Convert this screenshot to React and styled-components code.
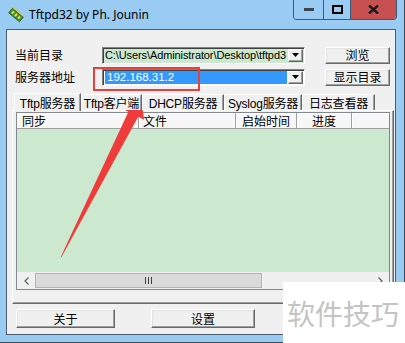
import React from 'react';
import styled, { createGlobalStyle } from 'styled-components';

const Global = createGlobalStyle`
  html, body { margin: 0; padding: 0; background: #fff; }
  body {
    width: 405px; height: 343px; overflow: hidden;
    font-family: "Liberation Sans", "Noto Sans CJK SC", sans-serif;
    font-size: 12px; color: #000;
  }
  * { box-sizing: border-box; }
`;

const Window = styled.div`
  position: relative;
  width: 405px;
  height: 343px;
  background: #99cbf3;
  border-right: 1px solid #3b4a57;
  border-bottom: 1px solid #3b4a57;
  padding: 0 8px 7px 6px;
  display: flex;
  flex-direction: column;
`;

const TitleBar = styled.div`
  height: 29px;
  flex: none;
  display: flex;
  align-items: flex-start;
`;

const TitleLeft = styled.div`
  height: 29px;
  display: flex;
  align-items: center;
  gap: 5px;
  padding-left: 2px;
  font-family: "Noto Sans", "Noto Sans CJK SC", sans-serif;
  font-size: 12px;
  color: #000;
`;

const Controls = styled.div`
  margin-left: auto;
  margin-right: -1px;
  display: flex;
  height: 20px;
  border: 1px solid #3d5a75;
  border-top: none;
  border-radius: 0 0 4px 4px;
  overflow: hidden;
`;

const CtlBtn = styled.div`
  width: ${p => p.$w}px;
  height: 100%;
  display: flex;
  align-items: center;
  justify-content: center;
  background: ${p => (p.$close ? '#c75050' : '#99cbf3')};
  border-left: ${p => (p.$first ? 'none' : '1px solid #3d5a75')};
`;

const Client = styled.div`
  flex: 1;
  min-height: 0;
  background: #f0f0f0;
  border: 1px solid #4c5c6a;
  display: flex;
  flex-direction: column;
`;

const Form = styled.div`
  display: grid;
  grid-template-columns: 87px 203px 1fr;
  grid-auto-rows: 18px;
  row-gap: 4px;
  padding: 16px 5px 0 8px;
  align-items: center;
`;

const Label = styled.div`
  font-family: "Noto Sans CJK SC", sans-serif;
  font-size: 12px;
  line-height: 18px;
`;

const Combo = styled.div`
  height: 17px;
  display: flex;
  align-items: center;
  background: ${p => p.$bg};
  border-style: solid;
  border-width: 1px;
  border-color: #828282 #ffffff #ffffff #828282;
  box-shadow: inset 1px 1px 0 #404040;
  padding: 1px 1px 1px 2px;
  overflow: hidden;
`;

const ComboText = styled.div`
  flex: 1;
  min-width: 0;
  height: 13px;
  line-height: 13px;
  white-space: nowrap;
  overflow: hidden;
  font-size: ${p => (p.$sel ? 11.5 : 11)}px;
  letter-spacing: ${p => (p.$sel ? 0 : -0.1)}px;
  padding-left: ${p => (p.$sel ? 2 : 0)}px;
  background: ${p => (p.$sel ? '#3399ff' : 'transparent')};
  color: ${p => (p.$sel ? '#fff' : '#000')};
  margin-right: 1px;
`;

const DropBtn = styled.div`
  flex: none;
  width: 15px;
  height: 13px;
  display: flex;
  align-items: center;
  justify-content: center;
  background: #f0f0f0;
  border-style: solid;
  border-width: 1px;
  border-color: #ffffff #696969 #696969 #ffffff;
  box-shadow: inset -1px -1px 0 #a0a0a0;
`;

const Btn = styled.div`
  width: ${p => p.$w}px;
  height: ${p => p.$h || 17}px;
  justify-self: end;
  display: flex;
  align-items: center;
  justify-content: center;
  background: #f0f0f0;
  border-style: solid;
  border-width: 1px;
  border-color: #ffffff #696969 #696969 #ffffff;
  box-shadow: inset -1px -1px 0 #a0a0a0, inset 1px 1px 0 #e3e3e3;
  font-family: "Noto Sans CJK SC", sans-serif;
  font-size: 12px;
  line-height: 1;
`;

const TabArea = styled.div`
  margin: 7px 1px 0 5px;
  display: flex;
  flex-direction: column;
`;

const TabStrip = styled.div`
  height: 17px;
  display: flex;
  align-items: flex-end;
  padding-left: 2px;
  position: relative;
  z-index: 1;
`;

const Tab = styled.div`
  width: ${p => p.$w}px;
  height: ${p => (p.$active ? 18 : 16)}px;
  margin-bottom: ${p => (p.$active ? -1 : 0)}px;
  display: flex;
  align-items: center;
  justify-content: center;
  background: #f0f0f0;
  border-style: solid;
  border-width: 1px 1px 0 1px;
  border-color: #ffffff #696969 #ffffff #ffffff;
  box-shadow: inset -1px 0 0 #a0a0a0;
  font-size: 12px;
  white-space: nowrap;
  letter-spacing: -0.2px;
`;

const Panel = styled.div`
  height: 194px;
  border-style: solid;
  border-width: 1px;
  border-color: #ffffff #696969 #696969 #ffffff;
  box-shadow: inset -1px -1px 0 #a0a0a0;
  padding: 1px 3px 13px 3px;
`;

const List = styled.div`
  width: 374px;
  height: 178px;
  border: 1px solid #828790;
  display: flex;
  flex-direction: column;
  background: #fff;
`;

const Header = styled.div`
  height: 16px;
  flex: none;
  display: flex;
  background: #f7f7f7;
  border-bottom: 1px solid #a0a0a0;
`;

const HCell = styled.div`
  width: ${p => (p.$w ? `${p.$w}px` : 'auto')};
  flex: ${p => (p.$w ? 'none' : '1')};
  border-right: ${p => (p.$w ? '1px solid #a0a0a0' : 'none')};
  box-shadow: inset 1px 1px 0 #ffffff;
  display: flex;
  align-items: center;
  justify-content: ${p => (p.$center ? 'center' : 'flex-start')};
  padding-left: ${p => p.$pl || 0}px;
  font-family: "Noto Sans CJK SC", sans-serif;
  font-size: 12px;
  line-height: 15px;
`;

const Body = styled.div`
  flex: 1;
  background: #cce8cf;
`;

const HScroll = styled.div`
  height: 17px;
  flex: none;
  display: flex;
  background: #f0f0f0;
`;

const ArrowBtn = styled.div`
  width: 18px;
  flex: none;
  display: flex;
  align-items: center;
  justify-content: center;
`;

const Track = styled.div`
  flex: 1;
  display: flex;
  align-items: stretch;
  padding: 1px 0;
`;

const Thumb = styled.div`
  width: 227px;
  background: #dadada;
  border: 1px solid #b4b4b4;
  display: flex;
  align-items: center;
  justify-content: center;
`;

const ButtonRow = styled.div`
  margin-top: 5px;
  display: flex;
  gap: 36px;
  padding-left: 9px;
`;

const RedBox = styled.div`
  position: absolute;
  left: 93px;
  top: 67px;
  width: 107px;
  height: 24px;
  border: 2px solid #e5413f;
`;

const ArrowSvg = styled.svg`
  position: absolute;
  left: 0;
  top: 0;
  pointer-events: none;
`;

const Watermark = styled.div`
  position: absolute;
  left: 283px;
  top: 282px;
  width: 122px;
  height: 61px;
  background: #fff;
  display: flex;
  align-items: center;
  padding-left: 4px;
  font-family: "Noto Sans CJK SC", sans-serif;
  font-size: 28px;
  color: #c4c4c4;
  white-space: nowrap;
`;

const Tri = () => (
  <svg width="7" height="4" viewBox="0 0 7 4"><path d="M0 0H7L3.5 4Z" fill="#000" /></svg>
);

const Chevron = ({ dir }) => (
  <svg width="5" height="8" viewBox="0 0 5 8">
    <path d={dir === 'l' ? 'M4.5 0.5L1 4l3.5 3.5' : 'M0.5 0.5L4 4 0.5 7.5'} fill="none" stroke="#606060" strokeWidth="1.2" />
  </svg>
);

const AppIcon = () => (
  <svg width="16" height="16" viewBox="0 0 16 16">
    <g transform="rotate(40 8 8)">
      <rect x="1" y="5" width="14" height="6" fill="#3f8f3a" stroke="#24561f" strokeWidth="0.8" />
      <rect x="3" y="6.5" width="2" height="3" fill="#f2e23a" />
      <rect x="7" y="6.5" width="2" height="3" fill="#f2e23a" />
      <rect x="11" y="6.5" width="2" height="3" fill="#f2e23a" />
      <rect x="1" y="3.5" width="14" height="1.2" fill="#d9c840" />
    </g>
  </svg>
);

const tabs = [
  { t: 'Tftp服务器', w: 67, a: true },
  { t: 'Tftp客户端', w: 61 },
  { t: 'DHCP服务器', w: 82 },
  { t: 'Syslog服务器', w: 78 },
  { t: '日志查看器', w: 73 },
];

export default function App() {
  return (
    <>
      <Global />
      <Window>
        <TitleBar>
          <TitleLeft>
            <AppIcon />
            <span>Tftpd32 by Ph. Jounin</span>
          </TitleLeft>
          <Controls>
            <CtlBtn $w={29} $first>
              <svg width="10" height="3"><rect width="10" height="3" fill="#3a4450" /></svg>
            </CtlBtn>
            <CtlBtn $w={27}>
              <svg width="11" height="9"><rect x="1" y="1" width="9" height="7" fill="none" stroke="#000" strokeWidth="2" /></svg>
            </CtlBtn>
            <CtlBtn $w={46} $close>
              <svg width="11" height="9" viewBox="0 0 11 9"><path d="M1 0.5L10 8.5M10 0.5L1 8.5" stroke="#1a1a1a" strokeWidth="2.4" /></svg>
            </CtlBtn>
          </Controls>
        </TitleBar>
        <Client>
          <Form>
            <Label>当前目录</Label>
            <Combo $bg="#cce8cf">
              <ComboText>C:\Users\Administrator\Desktop\tftpd3</ComboText>
              <DropBtn><Tri /></DropBtn>
            </Combo>
            <Btn $w={65}>浏览</Btn>
            <Label>服务器地址</Label>
            <Combo $bg="#ffffff">
              <ComboText $sel>192.168.31.2</ComboText>
              <DropBtn><Tri /></DropBtn>
            </Combo>
            <Btn $w={65}>显示目录</Btn>
          </Form>
          <TabArea>
            <TabStrip>
              {tabs.map(t => (
                <Tab key={t.t} $w={t.w} $active={t.a}>{t.t}</Tab>
              ))}
            </TabStrip>
            <Panel>
              <List>
                <Header>
                  <HCell $w={122} $pl={5}>同步</HCell>
                  <HCell $w={97} $pl={4}>文件</HCell>
                  <HCell $w={61} $center>启始时间</HCell>
                  <HCell $w={55} $center>进度</HCell>
                  <HCell />
                </Header>
                <Body />
                <HScroll>
                  <ArrowBtn><Chevron dir="l" /></ArrowBtn>
                  <Track>
                    <Thumb>
                      <svg width="7" height="7"><path d="M0.5 0v7M3.5 0v7M6.5 0v7" stroke="#404040" strokeWidth="1" /></svg>
                    </Thumb>
                  </Track>
                  <ArrowBtn><Chevron dir="r" /></ArrowBtn>
                </HScroll>
              </List>
            </Panel>
          </TabArea>
          <ButtonRow>
            <Btn $w={99} $h={19}>关于</Btn>
            <Btn $w={104} $h={19}>设置</Btn>
          </ButtonRow>
        </Client>
        <RedBox />
        <ArrowSvg width="405" height="343" viewBox="0 0 405 343">
          <polygon
            points="60.5,257.5 128.4,111.7 122.5,108.7 141,98 144.1,119.7 138.2,116.7 61.5,257"
            fill="#ef3b3a"
          />
        </ArrowSvg>
        <Watermark>软件技巧</Watermark>
      </Window>
    </>
  );
}
